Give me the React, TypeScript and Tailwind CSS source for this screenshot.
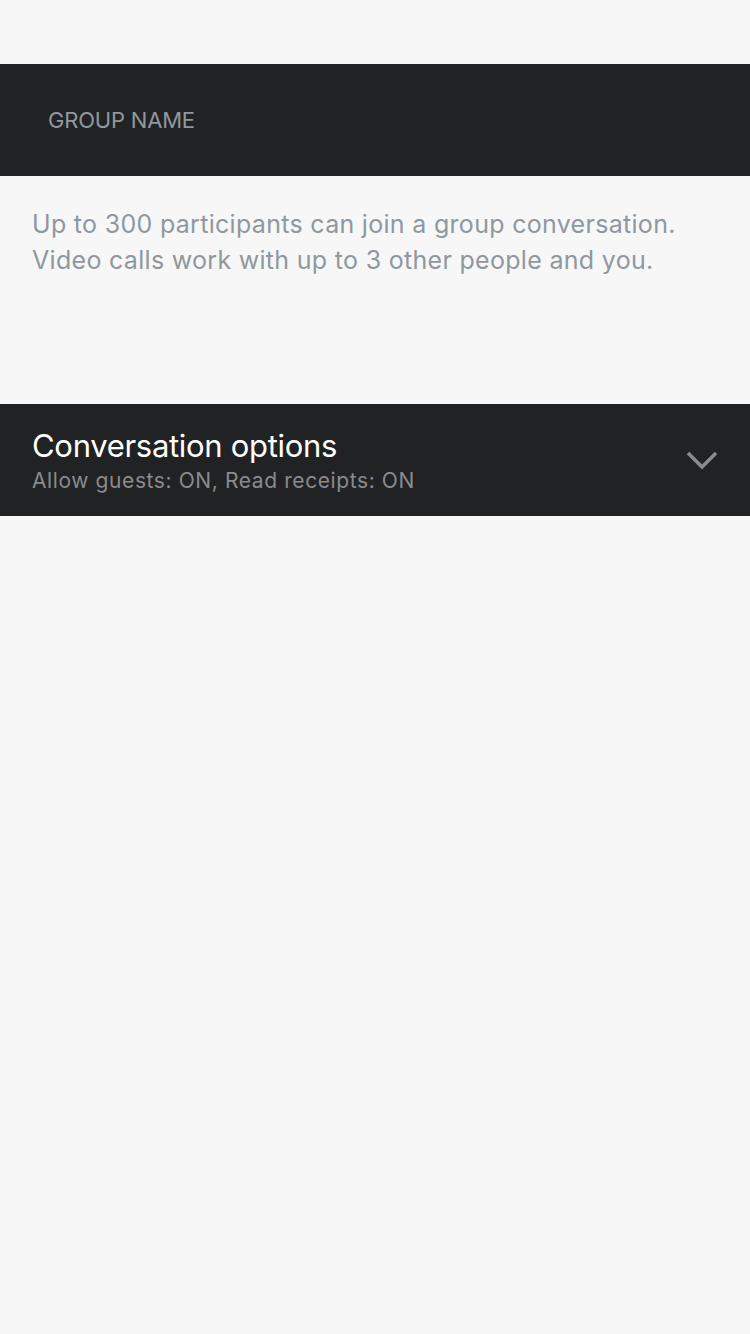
export default function App() {
  return (
    <div className="min-h-[1334px] w-full bg-[#f7f7f7] font-['Inter',sans-serif]">
      <div className="h-16" />
      <div className="flex h-[112px] items-center bg-[#212224] px-12">
        <span className="text-[22px] tracking-[-0.2px] text-[#8f989f]">GROUP NAME</span>
      </div>
      <div className="h-[228px] px-8 pt-[30px]">
        <p className="text-[25px] leading-[36px] tracking-[0.3px] text-[#8f989f]">
          Up to 300 participants can join a group conversation.
          <br />
          Video calls work with up to 3 other people and you.
        </p>
      </div>
      <div className="flex h-[112px] items-center justify-between bg-[#212224] px-8">
        <div className="flex flex-col pt-[4px]">
          <span className="text-[31px] leading-[36px] tracking-[-0.3px] text-white">Conversation options</span>
          <span className="mt-[2px] text-[21px] leading-[30px] tracking-[0.6px] text-[#8a8b8d]">Allow guests: ON, Read receipts: ON</span>
        </div>
        <svg width="32" height="20" viewBox="0 0 32 20" fill="none">
          <path d="M2 3 L16 17 L30 3" stroke="#8a8b8d" strokeWidth="3.5" />
        </svg>
      </div>
    </div>
  );
}
